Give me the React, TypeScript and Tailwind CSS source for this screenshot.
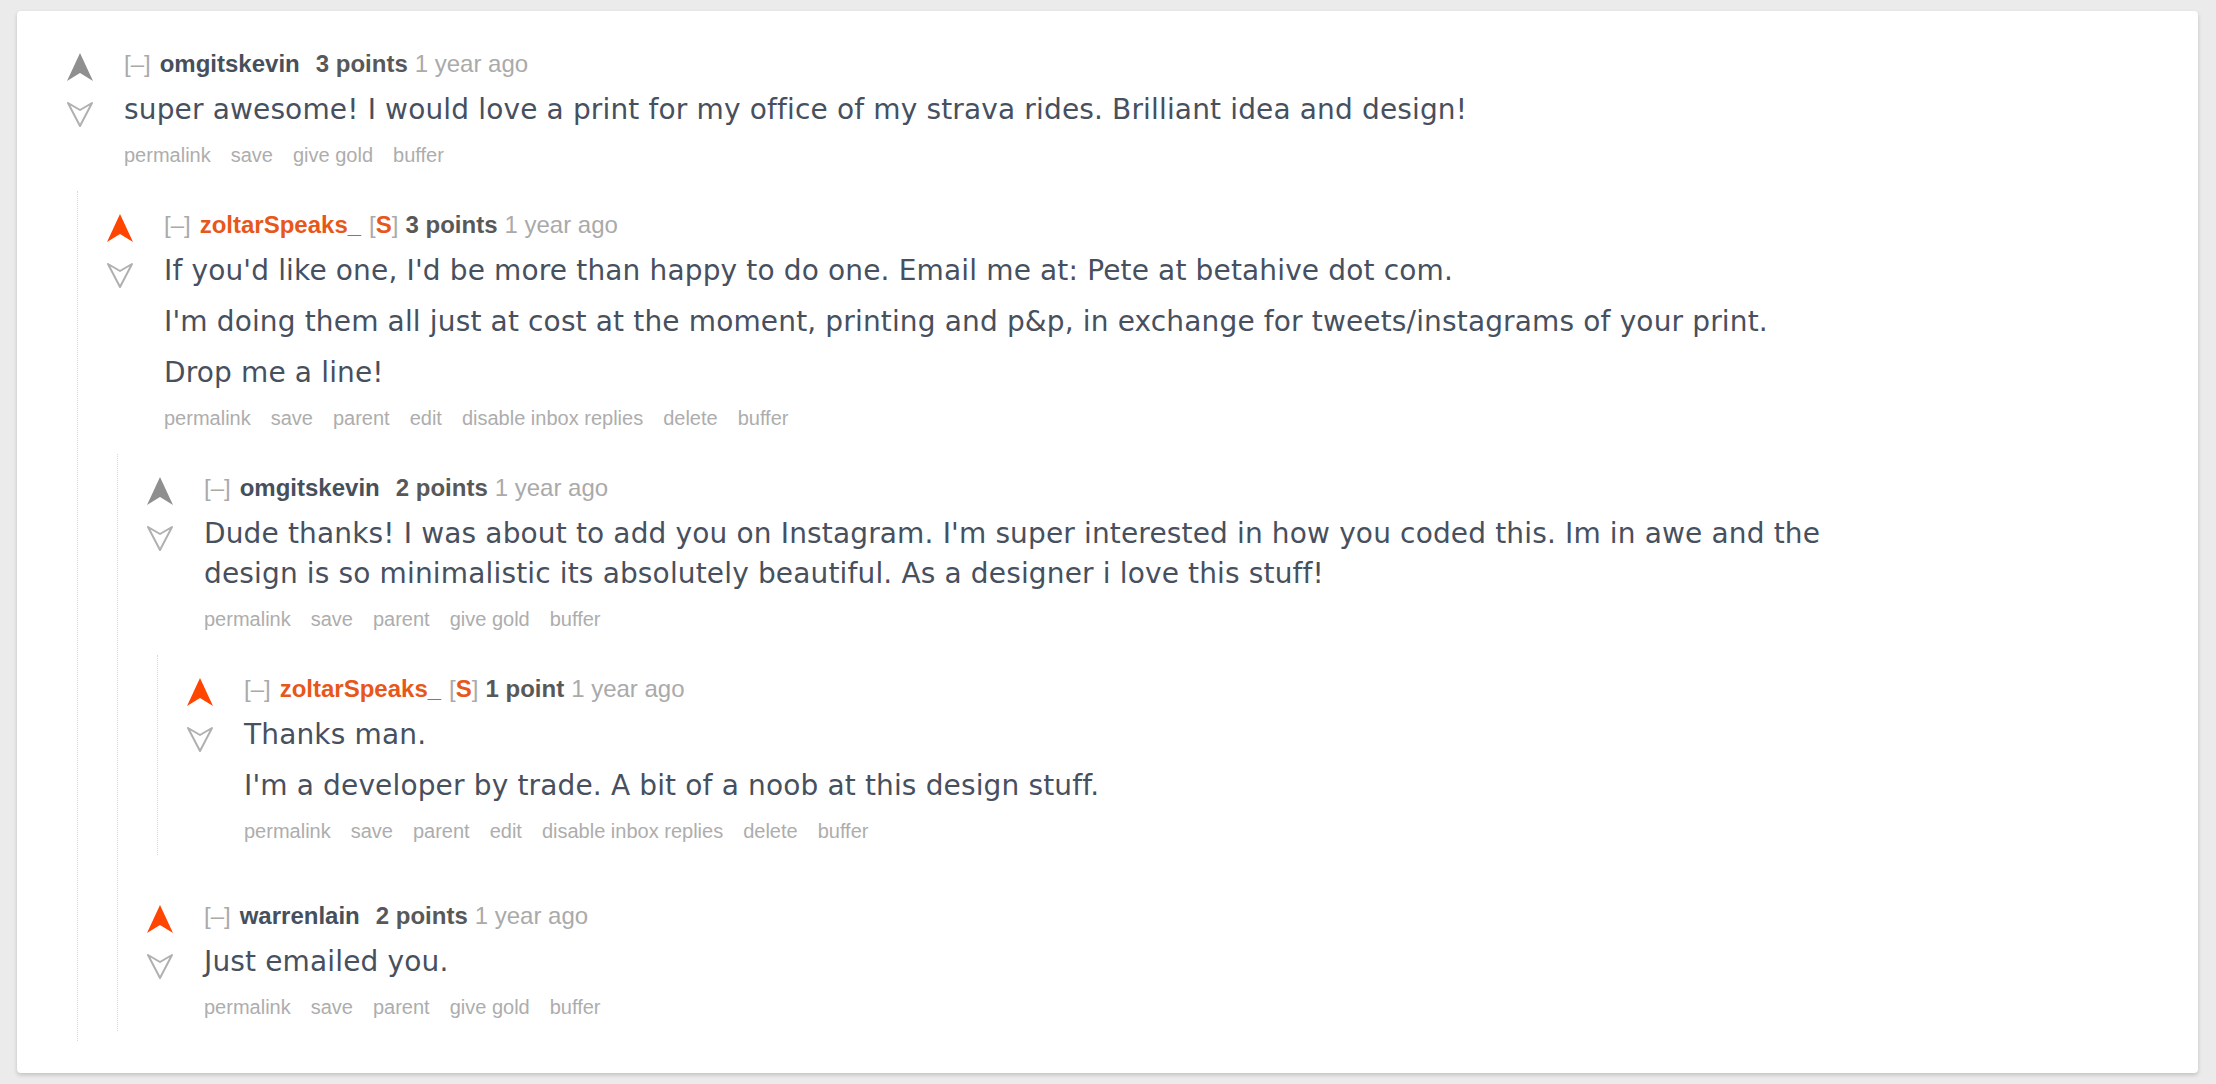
import React from "react";

type CommentData = {
  author: string;
  op?: boolean;
  points: string;
  voted?: boolean;
  body: string[];
  actions: string[];
  children?: CommentData[];
};

const mine = ["permalink", "save", "parent", "edit", "disable inbox replies", "delete", "buffer"];
const theirs = ["permalink", "save", "parent", "give gold", "buffer"];

const thread: CommentData = {
  author: "omgitskevin",
  points: "3 points",
  body: ["super awesome! I would love a print for my office of my strava rides. Brilliant idea and design!"],
  actions: ["permalink", "save", "give gold", "buffer"],
  children: [
    {
      author: "zoltarSpeaks_",
      op: true,
      voted: true,
      points: "3 points",
      body: [
        "If you'd like one, I'd be more than happy to do one. Email me at: Pete at betahive dot com.",
        "I'm doing them all just at cost at the moment, printing and p&p, in exchange for tweets/instagrams of your print.",
        "Drop me a line!",
      ],
      actions: mine,
      children: [
        {
          author: "omgitskevin",
          points: "2 points",
          body: [
            "Dude thanks! I was about to add you on Instagram. I'm super interested in how you coded this. Im in awe and the design is so minimalistic its absolutely beautiful. As a designer i love this stuff!",
          ],
          actions: theirs,
          children: [
            {
              author: "zoltarSpeaks_",
              op: true,
              voted: true,
              points: "1 point",
              body: ["Thanks man.", "I'm a developer by trade. A bit of a noob at this design stuff."],
              actions: mine,
            },
          ],
        },
        {
          author: "warrenlain",
          voted: true,
          points: "2 points",
          body: ["Just emailed you."],
          actions: theirs,
        },
      ],
    },
  ],
};

const UpArrow = ({ voted }: { voted?: boolean }) => (
  <svg width="28" height="30" viewBox="0 0 28 30" className="block">
    <filter id="soft">
      <feGaussianBlur stdDeviation="0.45" />
    </filter>
    <polygon
      points="14,1 27,29 14,21 1,29"
      fill={voted ? "#ff4500" : "#8f8f8f"}
      filter="url(#soft)"
    />
  </svg>
);

const DownArrow = () => (
  <svg width="28" height="27" viewBox="0 0 28 27" className="block">
    <polygon
      points="2,2 14,9 26,2 14,25"
      fill="none"
      stroke="#b0b0b0"
      strokeWidth="2"
      strokeLinejoin="round"
    />
  </svg>
);

const Comment = ({ c, first }: { c: CommentData; first?: boolean }) => {
  return (
    <div className={`pb-[10px] ${first ? "" : "mt-[17px]"}`}>
      <div className="flex pt-[20px]">
        <div className="w-[58px] shrink-0 pt-[2px] flex flex-col gap-[19px]">
          <UpArrow voted={c.voted} />
          <DownArrow />
        </div>
        <div className="flex-1 min-w-0">
          <div className="flex items-baseline h-[28px] leading-[28px] text-[24px] font-['Liberation_Sans',Arial,sans-serif] whitespace-nowrap">
            <span className="text-[#aaaaaa]">[–]</span>
            <span className={`ml-[9px] font-bold ${c.op ? "text-[#e8571a]" : "text-[#46505d]"}`}>
              {c.author}
            </span>
            {c.op && (
              <span className="ml-[8px] text-[#aaaaaa]">
                [<span className="font-bold text-[#e8571a]">S</span>]
              </span>
            )}
            <span className={`${c.op ? "ml-[7px]" : "ml-[16px]"} font-bold text-[#585858]`}>{c.points}</span>
            <span className="ml-[7px] text-[#aaaaaa]">1 year ago</span>
          </div>
          <div className="mt-[12px] max-w-[1680px] text-[28px] leading-[40px] tracking-[0.15px] text-[#47505e] font-['DejaVu_Sans',Verdana,sans-serif]">
            {c.body.map((p, i) => (
              <p key={i} className="mb-[11px]">
                {p}
              </p>
            ))}
          </div>
          <div className="mt-[4px] flex gap-[20px] h-[28px] leading-[28px] text-[20px] text-[#adadad] font-['Liberation_Sans',Arial,sans-serif] whitespace-nowrap">
            {c.actions.map((a) => (
              <span key={a}>{a}</span>
            ))}
          </div>
        </div>
      </div>
      {c.children && (
        <div className="ml-[11px] mt-[22px] pl-[28px] border-l border-dotted border-[#d6d6d6]">
          {c.children.map((ch, i) => (
            <Comment key={i} c={ch} first={i === 0} />
          ))}
        </div>
      )}
    </div>
  );
};

export default function App() {
  return (
    <div className="h-[1084px] bg-[#ebebeb] pt-[11px] pb-[11px] pl-[17px] pr-[18px]">
      <div className="h-full bg-white rounded-[4px] shadow-[0_2px_4px_rgba(0,0,0,0.18)] pl-[49px] pt-[19px]">
        <Comment c={thread} first />
      </div>
    </div>
  );
}
